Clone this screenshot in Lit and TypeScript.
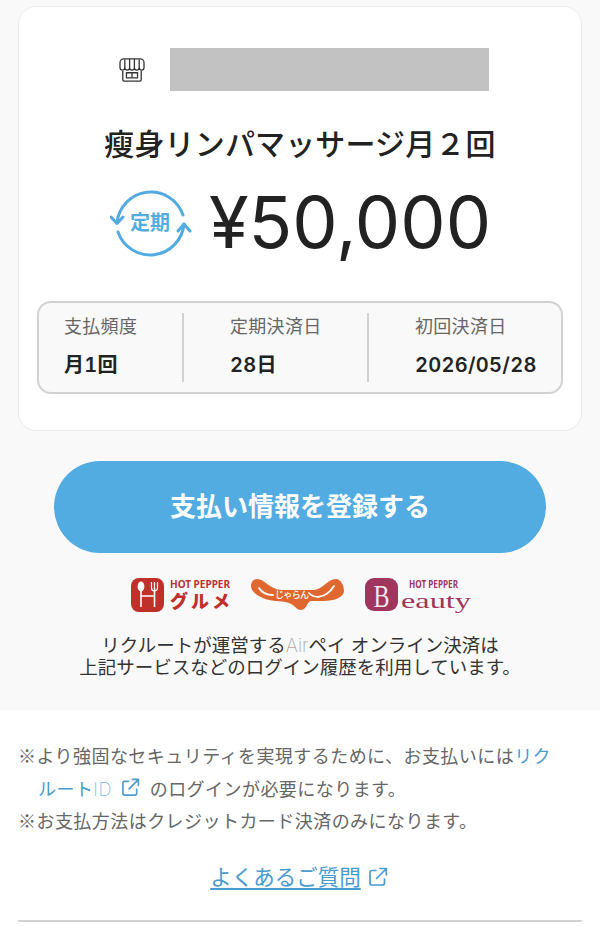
import { LitElement, html, css, svg } from 'lit';
import { customElement } from 'lit/decorators.js';

const extIcon = (size: number) => html`
  <svg class="ext" width=${size} height=${size} viewBox="0 0 20 20" fill="none" stroke="#4a9bd0" stroke-width="1.7" stroke-linecap="round" stroke-linejoin="round">
    <path d="M8 3.500H4a2 2 0 0 0-2 2V16a2 2 0 0 0 2 2h10.500a2 2 0 0 0 2-2v-4" />
    <path d="M8.500 11.500 18 2M12 1.500h6.300v6.300" />
  </svg>
`;

const gourmetLogo = svg`
  <rect x="0" y="0" width="33" height="34" rx="8" fill="#c0302a" />
  <ellipse cx="10" cy="8.500" rx="3.400" ry="5" fill="#fff" />
  <path d="M10 10v19M23.500 10v19M10 18h13.500" stroke="#fff" stroke-width="1.600" fill="none" />
  <path d="M20.500 4v6a3 3 0 0 0 6 0V4M23.500 4v6" stroke="#fff" stroke-width="1.200" fill="none" />
  <text x="39" y="10" class="hp" fill="#c0302a" textLength="60" lengthAdjust="spacingAndGlyphs">HOT PEPPER</text>
  <text x="39" y="30" class="gm" fill="#c0302a" textLength="60">グルメ</text>
`;

@customElement('app-root')
class AppRoot extends LitElement {
  static styles = css`
    :host {
      display: block;
      width: 600px;
      height: 926px;
      overflow: hidden;
      background: #fff;
      color: #222;
      font-family: Inter, "Noto Sans CJK JP", "Noto Sans", sans-serif;
    }
    .top {
      background: #f9f9f9;
      padding: 6px 18px 0;
      height: 704px;
    }
    .card {
      height: 425px;
      box-sizing: border-box;
      background: #fff;
      border: 1px solid #ececec;
      border-radius: 18px;
      padding: 41px 18px 0;
    }
    .shop {
      display: flex;
      align-items: center;
      gap: 25px;
      margin-left: 82px;
    }
    .shop svg {
      display: block;
    }
    .mask {
      width: 319px;
      height: 43px;
      background: #c2c2c2;
    }
    .title {
      margin-top: 30px;
      height: 46px;
      font-size: 30px;
      line-height: 46px;
      font-weight: 500;
      letter-spacing: 0.15px;
      text-align: center;
      white-space: nowrap;
    }
    .price {
      display: flex;
      align-items: center;
      margin: 12px 0 0 73px;
      height: 92px;
      gap: 17px;
    }
    .price svg {
      display: block;
      margin-top: -3px;
    }
    .amount {
      margin-top: -6px;
      font-size: 72px;
      line-height: 92px;
      font-weight: 400;
      color: #222;
      white-space: nowrap;
    }
    .terms {
      display: grid;
      grid-template-columns: 143px 185px 1fr;
      box-sizing: border-box;
      height: 93px;
      margin-top: 30px;
      padding: 10px 0;
      background: #f9f9f9;
      border: 2px solid #d2d2d2;
      border-radius: 14px;
    }
    .term {
      padding-left: 46px;
      border-left: 2px solid #d2d2d2;
      white-space: nowrap;
    }
    .term:first-child {
      padding-left: 25px;
      border-left: 0;
    }
    .term .label {
      margin-top: 2px;
      font-size: 18px;
      line-height: 24px;
      color: #666;
      letter-spacing: 0.3px;
    }
    .term .value {
      margin-top: 13px;
      font-size: 20px;
      line-height: 26px;
      font-weight: 600;
      color: #222;
      letter-spacing: 0.3px;
      font-variant-numeric: tabular-nums;
    }
    .pay {
      display: block;
      box-sizing: border-box;
      width: 492px;
      height: 92px;
      margin: 30px auto 0;
      padding: 0 0 5px;
      border: 0;
      border-radius: 46px;
      background: #52ace2;
      color: #fff;
      font-family: inherit;
      font-size: 26px;
      font-weight: 700;
      text-align: center;
    }
    .logos {
      display: flex;
      justify-content: center;
      gap: 21px;
      margin-top: 25px;
      margin-left: 1px;
    }
    .logos svg {
      display: block;
    }
    .hp {
      font: 700 10px "Noto Sans", sans-serif;
    }
    .gm {
      font: 900 18px "Noto Sans CJK JP", sans-serif;
    }
    .notice {
      margin-top: 16px;
      font-size: 18.500px;
      line-height: 22px;
      text-align: center;
      color: #333;
      white-space: nowrap;
    }
    .air {
      color: #aaa;
      font-weight: 200;
    }
    .bottom {
      padding: 29px 18px 0;
    }
    .notes {
      padding-right: 17px;
      font-family: "Noto Sans CJK JP", sans-serif;
      font-size: 18px;
      color: #666;
      letter-spacing: 0.45px;
    }
    .note {
      padding-left: 20px;
      text-indent: -20px;
      line-height: 33px;
    }
    .note + .note {
      line-height: 28px;
    }
    .blue {
      color: #4a9bd0;
    }
    .id {
      color: #7fbce3;
      font-family: Inter, sans-serif;
      font-size: 18px;
      font-weight: 200;
    }
    .ext {
      vertical-align: -1px;
      margin: 0 5px 0 5px;
    }
    .faq {
      display: flex;
      justify-content: center;
      align-items: center;
      margin-top: 26px;
      height: 34px;
      gap: 7px;
      padding-right: 2px;
      color: #4a9bd0;
      font-size: 21.500px;
      line-height: 34px;
    }
    .faq span {
      text-decoration: underline;
      text-underline-offset: 3px;
    }
    .faq .ext {
      margin: 0;
    }
    .rule {
      margin-top: 26px;
      border-top: 2px solid #d2d2d2;
    }
  `;

  render() {
    return html`
      <div class="top">
        <div class="card">
          <div class="shop">
            <svg width="26" height="24" viewBox="0 0 28 26" fill="none" stroke="#333" stroke-width="1.400" stroke-linejoin="round">
              <path d="M4 14v9.500a1.500 1.500 0 0 0 1.500 1.500h17a1.500 1.500 0 0 0 1.500-1.500V14" />
              <path d="M1 10.500V5a4 4 0 0 1 4-4h18a4 4 0 0 1 4 4v5.500c0 3.500-5 3.500-5.200 0 0 3.500-5.100 3.500-5.200 0 0 3.500-5.200 3.500-5.200 0 0 3.500-5.200 3.500-5.200 0 0 3.500-5.200 3.500-5.200 0Z" />
              <path d="M6.200 1.500v9M11.400 1v9.500M16.600 1v9.500M21.800 1.500v9" />
              <rect x="8" y="16" width="12" height="5.500" />
              <path d="M14 16v5.500" />
            </svg>
            <div class="mask"></div>
          </div>
          <div class="title">瘦身リンパマッサージ月２回</div>
          <div class="price">
            <svg width="82" height="74" viewBox="0 0 82 74" fill="none" stroke="#52ace2" stroke-width="3" stroke-linecap="round" stroke-linejoin="round">
              <path d="M7 36A34 34 0 0 1 73 28" />
              <path d="M74 37A34 34 0 0 1 8 45" />
              <path d="M1 30l6 6.500 6-6.500" />
              <path d="M68 44l6-7 6 7" />
              <text x="40" y="43" text-anchor="middle" fill="#52ace2" stroke="none" font-size="20" font-weight="600">定期</text>
            </svg>
            <div class="amount">¥50,000</div>
          </div>
          <div class="terms">
            <div class="term">
              <div class="label">支払頻度</div>
              <div class="value">月1回</div>
            </div>
            <div class="term">
              <div class="label">定期決済日</div>
              <div class="value">28日</div>
            </div>
            <div class="term">
              <div class="label">初回決済日</div>
              <div class="value">2026/05/28</div>
            </div>
          </div>
        </div>
        <button class="pay">支払い情報を登録する</button>
        <div class="logos">
          <svg width="99" height="40" viewBox="0 0 99 40">${gourmetLogo}</svg>
          <svg width="93" height="40" viewBox="0 0 93 40">
            <path d="M6 1C14 1 18 11 30 12H62C72 12 76 1 85 1 90 1 93 8 93 13 93 19 84 23 72 23H60C56 23 56 32 50 32 45 32 44 27 38 25 28 22 20 24 12 20 5 17 0 13 0 8 0 4 3 1 6 1Z" fill="#e0672f" />
            <path d="M8 10C11 15 16 17 22 17M58 15C62 20 74 22 83 8" stroke="#fff" stroke-width="1.800" fill="none" stroke-linecap="round" />
            <text x="24" y="20" fill="#fff" font-size="9" font-weight="500" textLength="34">じゃらん</text>
          </svg>
          <svg width="106" height="40" viewBox="0 0 106 40">
            <rect x="0" y="0" width="33" height="33" rx="9" fill="#a0365e" />
            <text x="8.500" y="28.500" fill="#f7e6ec" font-family="Liberation Serif" font-size="32" textLength="16" lengthAdjust="spacingAndGlyphs">B</text>
            <text x="44" y="10" class="hp" fill="#a0365e" textLength="49" lengthAdjust="spacingAndGlyphs">HOT PEPPER</text>
            <text x="36" y="30" fill="#a0365e" font-family="Liberation Serif" font-size="22" textLength="70" lengthAdjust="spacingAndGlyphs">eauty</text>
          </svg>
        </div>
        <div class="notice">
          リクルートが運営する<span class="air">Air</span>ペイ オンライン決済は<br />
          上記サービスなどのログイン履歴を利用しています。
        </div>
      </div>
      <div class="bottom">
        <div class="notes">
          <div class="note">※より強固なセキュリティを実現するために、お支払いには<span class="blue">リクルート<span class="id">ID</span></span>${extIcon(19)}のログインが必要になります。</div>
          <div class="note">※お支払方法はクレジットカード決済のみになります。</div>
        </div>
        <div class="faq"><span>よくあるご質問</span>${extIcon(20)}</div>
        <div class="rule"></div>
      </div>
    `;
  }
}
